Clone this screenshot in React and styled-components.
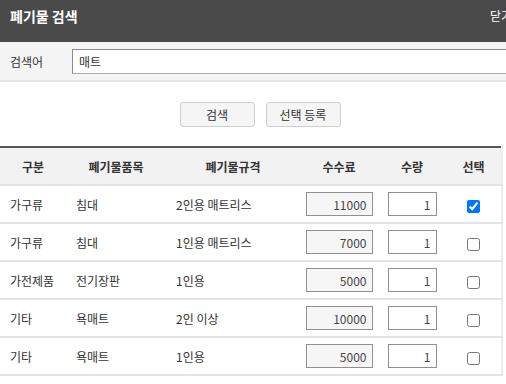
import React, { useState } from "react";
import styled, { createGlobalStyle } from "styled-components";

const rows = [
  { kind: "가구류", item: "침대", spec: "2인용 매트리스", fee: 11000, checked: true },
  { kind: "가구류", item: "침대", spec: "1인용 매트리스", fee: 7000, checked: false },
  { kind: "가전제품", item: "전기장판", spec: "1인용", fee: 5000, checked: false },
  { kind: "기타", item: "욕매트", spec: "2인 이상", fee: 10000, checked: false },
  { kind: "기타", item: "욕매트", spec: "1인용", fee: 5000, checked: false },
];

const App = () => {
  const [keyword, setKeyword] = useState("매트");
  const [list, setList] = useState(rows.map((r) => ({ ...r, qty: 1 })));

  const toggle = (i) => {
    setList(list.map((r, idx) => (idx === i ? { ...r, checked: !r.checked } : r)));
  };

  return (
    <Popup>
      <GlobalStyle />
      <Header>
        <h1>폐기물 검색</h1>
        <CloseButton>닫기</CloseButton>
      </Header>
      <SearchBar>
        <label htmlFor="keyword">검색어</label>
        <input id="keyword" value={keyword} onChange={(e) => setKeyword(e.target.value)} />
      </SearchBar>
      <ButtonRow>
        <Button>검색</Button>
        <Button>선택 등록</Button>
      </ButtonRow>
      <Table>
        <colgroup>
          <col style={{ width: 66 }} />
          <col style={{ width: 100 }} />
          <col style={{ width: 134 }} />
          <col style={{ width: 78 }} />
          <col style={{ width: 68 }} />
          <col style={{ width: 56 }} />
        </colgroup>
        <thead>
          <tr>
            <th>구분</th>
            <th>폐기물품목</th>
            <th>폐기물규격</th>
            <th>수수료</th>
            <th>수량</th>
            <th>선택</th>
          </tr>
        </thead>
        <tbody>
          {list.map((r, i) => (
            <tr key={i}>
              <td>{r.kind}</td>
              <td>{r.item}</td>
              <td>{r.spec}</td>
              <CenterCell>
                <NumInput readOnly value={r.fee} $wide />
              </CenterCell>
              <CenterCell>
                <NumInput value={r.qty} onChange={() => {}} />
              </CenterCell>
              <CenterCell>
                <Check type="checkbox" checked={r.checked} onChange={() => toggle(i)} />
              </CenterCell>
            </tr>
          ))}
        </tbody>
      </Table>
    </Popup>
  );
};

const GlobalStyle = createGlobalStyle`
  html, body {
    margin: 0;
    padding: 0;
    background: #fff;
    overflow: hidden;
  }
  body {
    font-family: "Noto Sans CJK KR", "Noto Sans", sans-serif;
    font-size: 12px;
    color: #333;
  }
`;

const Popup = styled.div`
  width: 520px;
`;

const Header = styled.div`
  height: 42px;
  background: #4a4a4a;
  display: flex;
  justify-content: space-between;
  align-items: flex-start;
  padding: 0 0 0 10px;
  box-sizing: border-box;

  h1 {
    margin: 0;
    padding-top: 6px;
    font-size: 14px;
    font-weight: 700;
    color: #fff;
    line-height: 20px;
  }
`;

const CloseButton = styled.button`
  border: 0;
  background: none;
  padding: 6px 8px 0 0;
  color: #fff;
  font: inherit;
  font-size: 12px;
  line-height: 20px;
  cursor: pointer;
`;

const SearchBar = styled.div`
  height: 38px;
  background: #f4f4f4;
  border-bottom: 2px solid #e6e6e6;
  display: flex;
  align-items: center;
  padding-left: 10px;

  label {
    width: 62px;
    font-size: 12px;
    color: #333;
  }

  input {
    width: 440px;
    height: 25px;
    box-sizing: border-box;
    border: 1px solid #a9a9a9;
    border-top-color: #8c8c8c;
    border-left-color: #8c8c8c;
    padding: 0 6px;
    font: inherit;
    font-size: 12px;
    color: #333;
    background: #fff;
    outline: none;
  }
`;

const ButtonRow = styled.div`
  display: flex;
  justify-content: center;
  gap: 11px;
  padding: 20px 0 19px;
`;

const Button = styled.button`
  min-width: 75px;
  height: 25px;
  padding: 0 10px;
  border: 1px solid #cfcfcf;
  border-radius: 3px;
  background: #f5f5f5;
  font: inherit;
  font-size: 12px;
  color: #333;
  cursor: pointer;
`;

const Table = styled.table`
  width: 502px;
  border-collapse: collapse;
  table-layout: fixed;
  border-top: 2px solid #555;
  border-right: 2px solid #ececec;

  th {
    height: 36px;
    background: #f2f2f2;
    font-weight: 700;
    font-size: 12px;
    color: #333;
    text-align: center;
    border-bottom: 2px solid #e4e4e4;
    padding: 0;
  }

  td {
    height: 36px;
    padding: 0 0 0 10px;
    font-size: 12px;
    color: #333;
    border-bottom: 2px solid #e4e4e4;
    white-space: nowrap;
  }
`;

const CenterCell = styled.td`
  && {
    padding: 0;
    text-align: center;
  }
`;

const NumInput = styled.input`
  width: ${(p) => (p.$wide ? "67px" : "49px")};
  height: 24px;
  box-sizing: border-box;
  border: 1px solid #8f8f8f;
  background: ${(p) => (p.$wide ? "#f6f6f6" : "#fff")};
  text-align: right;
  padding: 0 5px;
  font: inherit;
  font-size: 12px;
  color: #444;
  outline: none;
  vertical-align: middle;
`;

const Check = styled.input`
  width: 13px;
  height: 13px;
  margin: 0;
  vertical-align: middle;
`;

export default App;
